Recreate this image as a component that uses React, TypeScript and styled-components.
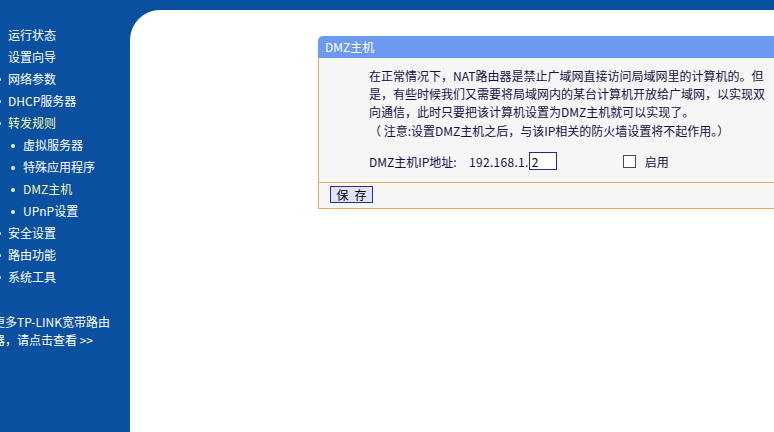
import React from "react";
import styled, { createGlobalStyle } from "styled-components";

const GlobalStyle = createGlobalStyle`
  html, body {
    margin: 0;
    padding: 0;
    background: #0a50a1;
    overflow: hidden;
  }
  body {
    font-family: "Noto Sans CJK SC", "DejaVu Sans", sans-serif;
    font-size: 12px;
  }
`;

const Frame = styled.div`
  display: flex;
  width: 774px;
  height: 432px;
  background: #0a50a1;
  overflow: hidden;
`;

const Sidebar = styled.nav`
  width: 130px;
  flex: none;
  padding-top: 24px;
  overflow: hidden;
  display: flex;
  flex-direction: column;
`;

const MenuItem = styled.div<{ $level?: number; $active?: boolean; $dot?: boolean }>`
  position: relative;
  height: 22px;
  line-height: 22px;
  padding-left: ${(p) => (p.$level === 2 ? 23 : 8)}px;
  color: ${(p) => (p.$active ? "#eef7a8" : "#ffffff")};
  white-space: nowrap;

  &::before {
    content: "";
    display: ${(p) => (p.$dot === false ? "none" : "block")};
    position: absolute;
    top: 10px;
    left: ${(p) => (p.$level === 2 ? 11 : -2)}px;
    width: ${(p) => (p.$level === 2 ? 4 : 3)}px;
    height: ${(p) => (p.$level === 2 ? 4 : 3)}px;
    border-radius: 50%;
    background: ${(p) => (p.$level === 2 ? "#dff5c8" : "#e8f0ff")};
  }
`;

/* the promo text sits partly under the sidebar's left edge */
const MoreLink = styled.div`
  margin-top: 25px;
  margin-left: -7px;
  color: #ffffff;
  line-height: 18px;
  white-space: nowrap;
`;

const Main = styled.main`
  flex: 1;
  margin-top: 10px;
  background: #ffffff;
  border-top-left-radius: 30px;
  overflow: hidden;
  padding: 26px 0 0 188px;
`;

const Panel = styled.section`
  width: 520px;
`;

const PanelHeader = styled.div`
  height: 22px;
  line-height: 22px;
  padding-left: 7px;
  background: #6c9af0;
  border-top-left-radius: 5px;
  color: #ffffff;
`;

const PanelBody = styled.div`
  background: #f6f6f6;
  border-left: 1px solid #f0a860;
  padding: 9px 0 0 50px;
  height: 115px;
  color: #12124a;
`;

const Para = styled.p`
  margin: 0;
  line-height: 18px;
  white-space: nowrap;
`;

const Note = styled(Para)`
  margin-top: 1px;
`;

const FieldRow = styled.div`
  display: flex;
  align-items: center;
  height: 18px;
  margin-top: 12px;
`;

const FieldLabel = styled.span`
  width: 100px;
`;

const IpPrefix = styled.span`
  letter-spacing: 0.3px;
`;

const OctetInput = styled.input`
  box-sizing: border-box;
  width: 28px;
  height: 18px;
  margin: 0;
  padding: 0 2px;
  border: 1px solid #1f2f7c;
  background: #ffffff;
  font: inherit;
  font-size: 12px;
  color: #000;
  outline: none;
`;

const CheckLabel = styled.label`
  display: flex;
  align-items: center;
  margin-left: 66px;
  gap: 9px;
`;

const CheckBox = styled.span`
  display: inline-block;
  box-sizing: border-box;
  width: 13px;
  height: 13px;
  border: 1px solid #404a60;
  background: #ffffff;
`;

const PanelFooter = styled.div`
  border-top: 1px solid #f0a860;
  border-bottom: 1px solid #f0a860;
  border-left: 1px solid #f0a860;
  background: #f6f6f6;
  height: 27px;
  padding: 3px 0 0 11px;
  box-sizing: border-box;
`;

const SaveButton = styled.button`
  box-sizing: border-box;
  width: 43px;
  height: 17px;
  padding: 0;
  border: 1px solid #2a2f80;
  background: #dfe3ff;
  color: #000000;
  font: inherit;
  font-size: 12px;
  line-height: 15px;
  cursor: pointer;
`;

type NavEntry = { label: string; level?: number; active?: boolean; dot?: boolean };

const nav: NavEntry[] = [
  { label: "运行状态", dot: false },
  { label: "设置向导", dot: false },
  { label: "网络参数" },
  { label: "DHCP服务器" },
  { label: "转发规则", active: true },
  { label: "虚拟服务器", level: 2 },
  { label: "特殊应用程序", level: 2 },
  { label: "DMZ主机", level: 2, active: true },
  { label: "UPnP设置", level: 2 },
  { label: "安全设置" },
  { label: "路由功能" },
  { label: "系统工具" },
];

export default function App() {
  return (
    <>
      <GlobalStyle />
      <Frame>
        <Sidebar>
          {nav.map((n) => (
            <MenuItem key={n.label} $level={n.level} $active={n.active} $dot={n.dot}>
              {n.label}
            </MenuItem>
          ))}
          <MoreLink>
            更多TP-LINK宽带路由
            <br />
            器，请点击查看 &gt;&gt;
          </MoreLink>
        </Sidebar>
        <Main>
          <Panel>
            <PanelHeader>DMZ主机</PanelHeader>
            <PanelBody>
              <Para>
                在正常情况下，NAT路由器是禁止广域网直接访问局域网里的计算机的。但
                <br />
                是，有些时候我们又需要将局域网内的某台计算机开放给广域网，以实现双
                <br />
                向通信，此时只要把该计算机设置为DMZ主机就可以实现了。
              </Para>
              <Note>（ 注意:设置DMZ主机之后，与该IP相关的防火墙设置将不起作用。）</Note>
              <FieldRow>
                <FieldLabel>DMZ主机IP地址:</FieldLabel>
                <IpPrefix>192.168.1.</IpPrefix>
                <OctetInput defaultValue="2" />
                <CheckLabel>
                  <CheckBox />
                  启用
                </CheckLabel>
              </FieldRow>
            </PanelBody>
            <PanelFooter>
              <SaveButton>{"保\u2002存"}</SaveButton>
            </PanelFooter>
          </Panel>
        </Main>
      </Frame>
    </>
  );
}
